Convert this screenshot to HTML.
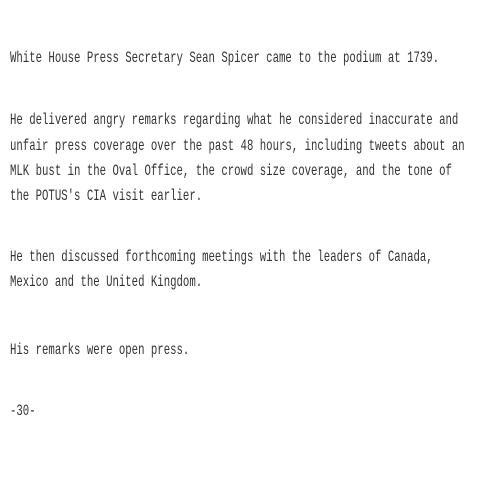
<html><head><style>
body{margin:0;width:480px;height:480px;background:#fff;overflow:hidden;position:relative}
div{position:absolute;left:10px;white-space:pre;font-family:"Liberation Mono",monospace;font-size:16px;line-height:20px;color:#333;transform-origin:0 50%;transform:scaleX(0.667)}
</style></head><body>
<div style="top:48px">White House Press Secretary Sean Spicer came to the podium at 1739.</div>
<div style="top:110px">He delivered angry remarks regarding what he considered inaccurate and</div>
<div style="top:136px">unfair press coverage over the past 48 hours, including tweets about an</div>
<div style="top:161px">MLK bust in the Oval Office, the crowd size coverage, and the tone of</div>
<div style="top:186px">the POTUS's CIA visit earlier.</div>
<div style="top:247px">He then discussed forthcoming meetings with the leaders of Canada,</div>
<div style="top:272px">Mexico and the United Kingdom.</div>
<div style="top:340px">His remarks were open press.</div>
<div style="top:401px">-30-</div>
</body></html>
